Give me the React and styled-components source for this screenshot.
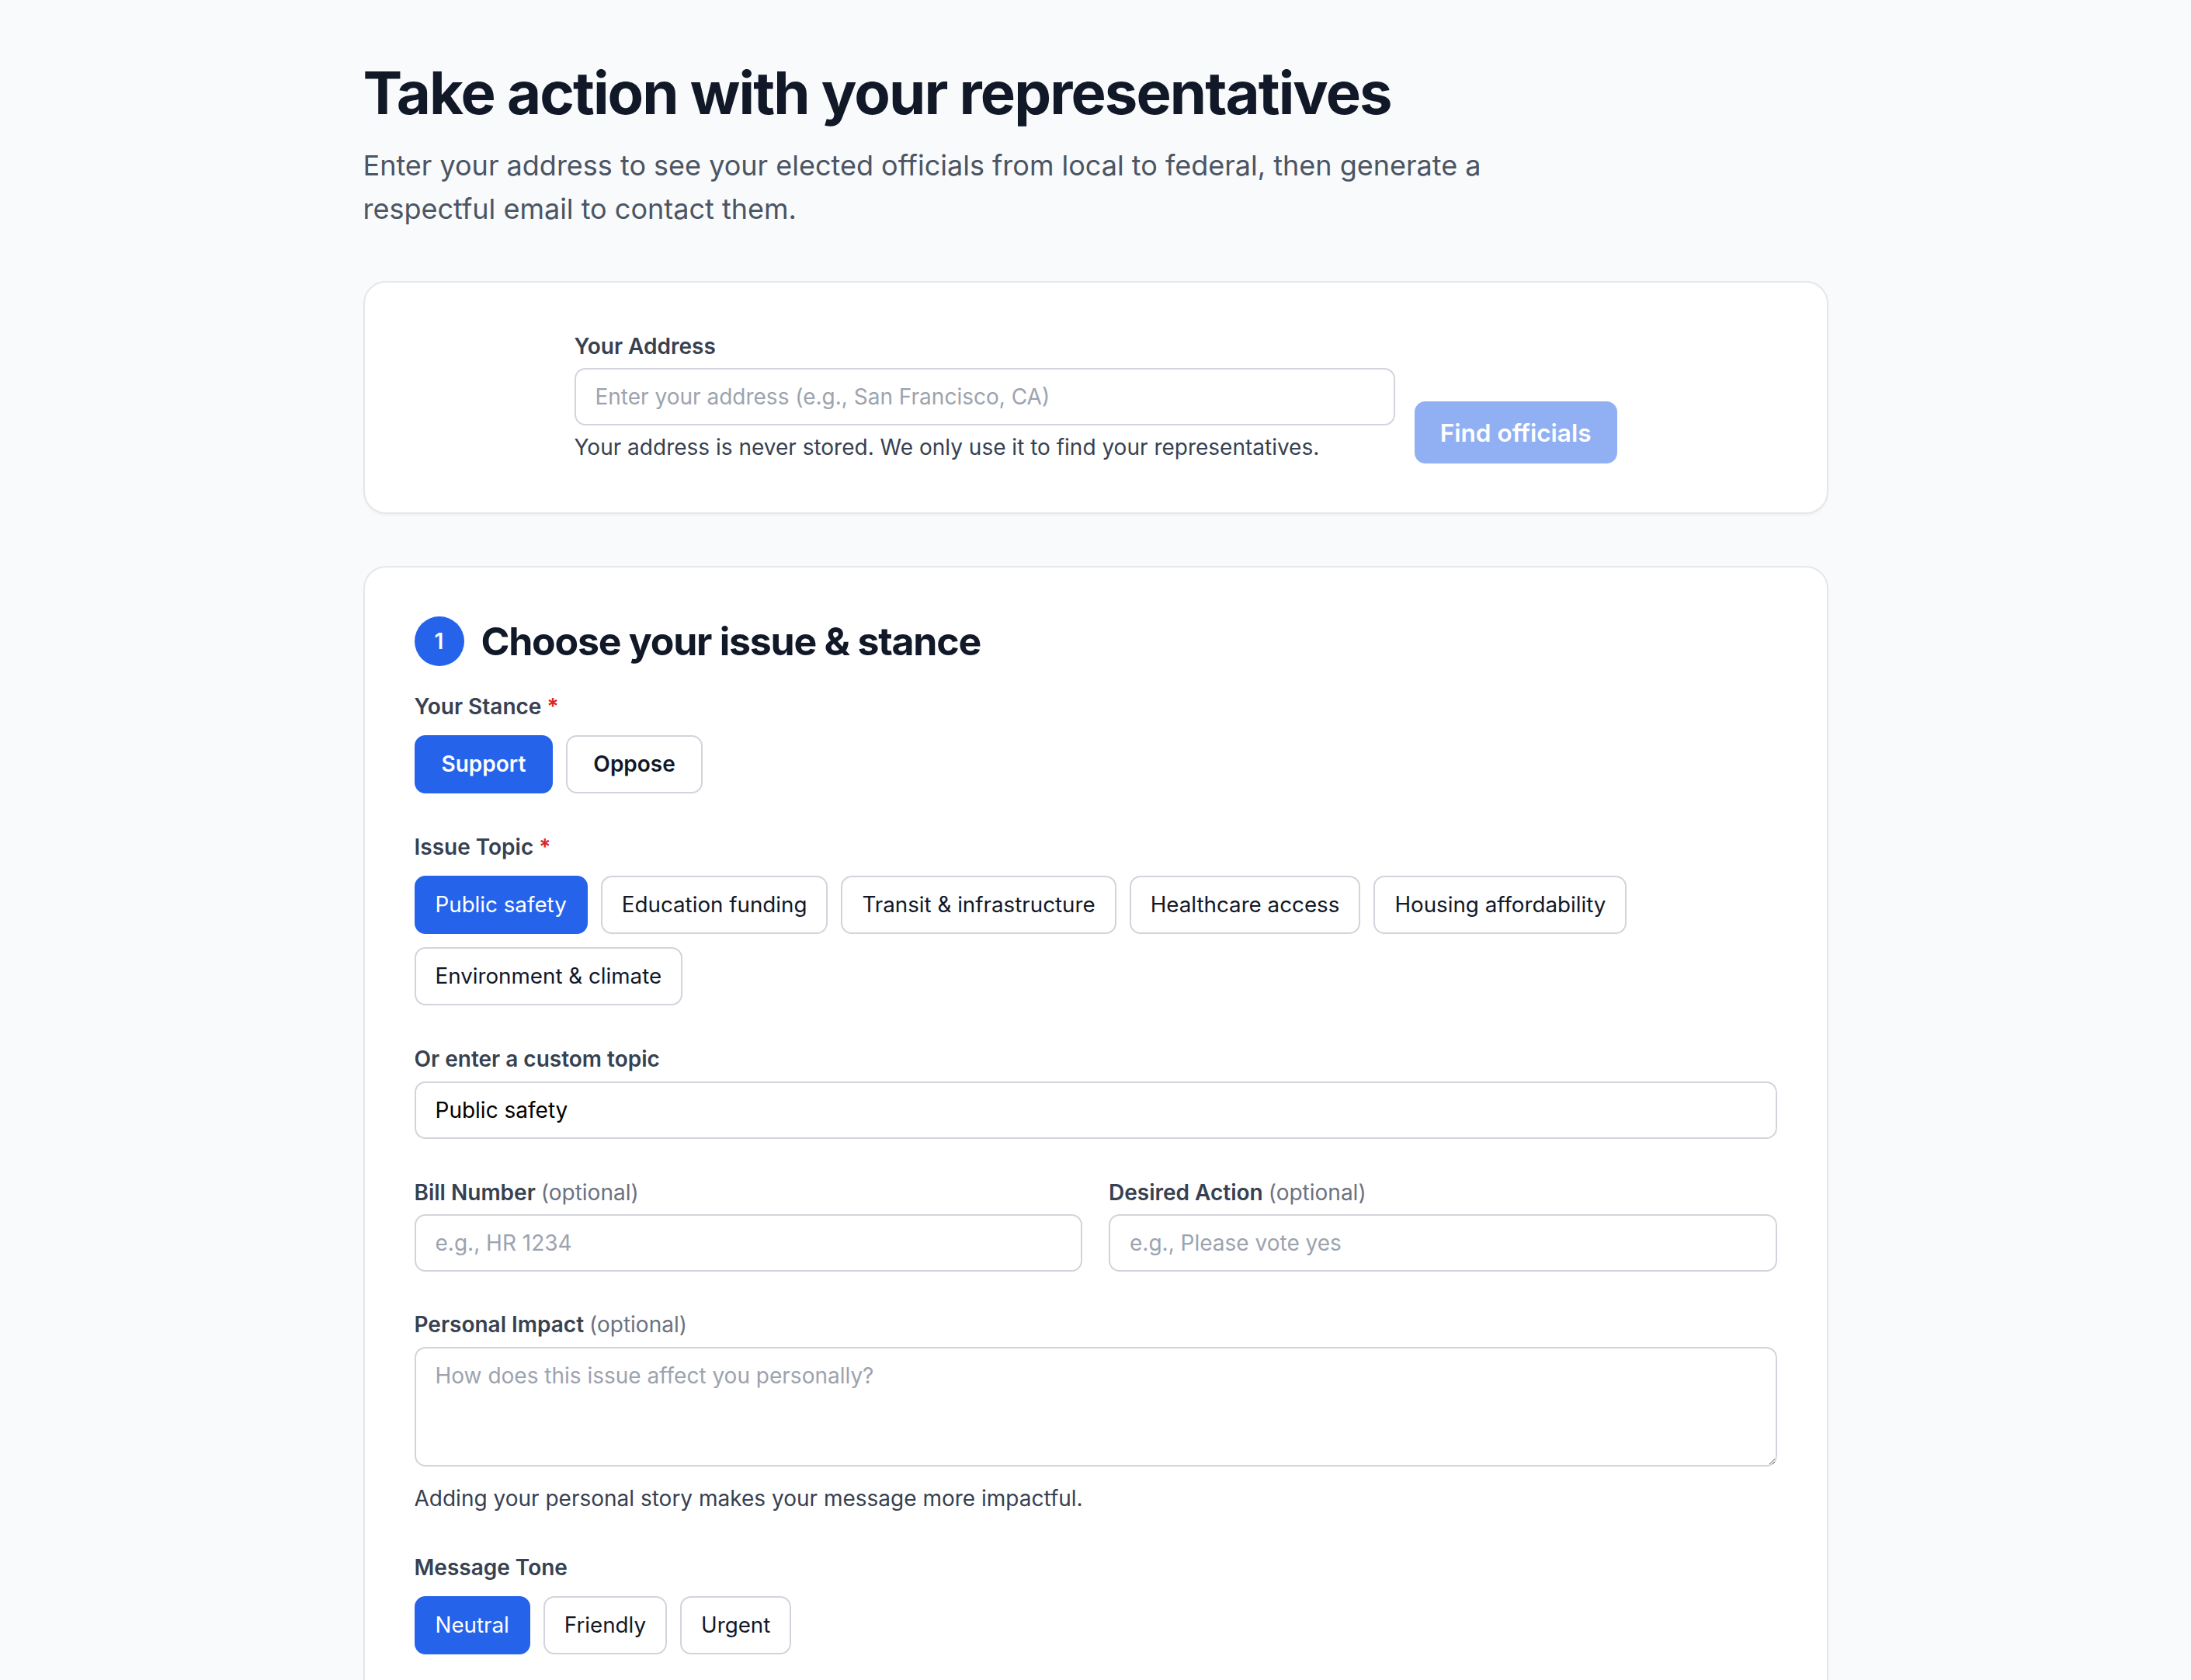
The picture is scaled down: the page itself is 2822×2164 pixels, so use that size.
import React, { useState } from "react";
import styled, { createGlobalStyle } from "styled-components";

const GlobalStyle = createGlobalStyle`
  * {
    box-sizing: border-box;
  }

  body {
    margin: 0;
    background: #f9fafb;
    font-family: Inter, "Noto Sans", sans-serif;
    color: #111827;
  }
`;

const topics = [
  "Public safety",
  "Education funding",
  "Transit & infrastructure",
  "Healthcare access",
  "Housing affordability",
  "Environment & climate",
];

const tones = ["Neutral", "Friendly", "Urgent"];

const App = () => {
  const [stance, setStance] = useState("Support");
  const [topic, setTopic] = useState("Public safety");
  const [tone, setTone] = useState("Neutral");

  return (
    <Page>
      <GlobalStyle />
      <Title>Take action with your representatives</Title>
      <Lead>
        Enter your address to see your elected officials from local to federal, then generate a respectful
        email to contact them.
      </Lead>

      <Card $padTop={62}>
        <AddressRow>
          <AddressField>
            <Label htmlFor="address">Your Address</Label>
            <TextInput id="address" placeholder="Enter your address (e.g., San Francisco, CA)" />
            <Hint $gap={8}>Your address is never stored. We only use it to find your representatives.</Hint>
          </AddressField>
          <FindButton disabled>Find officials</FindButton>
        </AddressRow>
      </Card>

      <Card $padTop={63} $spaced>
        <StepHeader>
          <StepBadge>1</StepBadge>
          <StepTitle>Choose your issue &amp; stance</StepTitle>
        </StepHeader>

        <Section $gap={32}>
          <Label>
            Your Stance <Required>*</Required>
          </Label>
          <ChoiceRow>
            {["Support", "Oppose"].map((s) => (
              <ChoiceButton key={s} $strong $active={stance === s} onClick={() => setStance(s)}>
                {s}
              </ChoiceButton>
            ))}
          </ChoiceRow>
        </Section>

        <Section>
          <Label>
            Issue Topic <Required>*</Required>
          </Label>
          <ChoiceRow>
            {topics.map((t) => (
              <ChoiceButton key={t} $active={topic === t} onClick={() => setTopic(t)}>
                {t}
              </ChoiceButton>
            ))}
          </ChoiceRow>
        </Section>

        <Section>
          <Label htmlFor="custom">Or enter a custom topic</Label>
          <TextInput id="custom" value={topic} onChange={(e) => setTopic(e.target.value)} />
        </Section>

        <Section>
          <TwoCol>
            <div>
              <Label htmlFor="bill">
                Bill Number <Optional>(optional)</Optional>
              </Label>
              <TextInput id="bill" placeholder="e.g., HR 1234" />
            </div>
            <div>
              <Label htmlFor="action">
                Desired Action <Optional>(optional)</Optional>
              </Label>
              <TextInput id="action" placeholder="e.g., Please vote yes" />
            </div>
          </TwoCol>
        </Section>

        <Section $gap={48}>
          <Label htmlFor="impact">
            Personal Impact <Optional>(optional)</Optional>
          </Label>
          <TextArea id="impact" placeholder="How does this issue affect you personally?" />
          <Hint $gap={21}>Adding your personal story makes your message more impactful.</Hint>
        </Section>

        <Section $gap={47}>
          <Label>Message Tone</Label>
          <ChoiceRow>
            {tones.map((t) => (
              <ChoiceButton key={t} $active={tone === t} onClick={() => setTone(t)}>
                {t}
              </ChoiceButton>
            ))}
          </ChoiceRow>
        </Section>
      </Card>
    </Page>
  );
};

export default App;

const Page = styled.main`
  max-width: 1887px;
  margin: 0 auto;
  padding: 78px 0 80px;
`;

const Title = styled.h1`
  margin: 0;
  font-size: 76px;
  line-height: 1.1;
  font-weight: 700;
  letter-spacing: -0.025em;
  color: #111827;
`;

const Lead = styled.p`
  margin: 23px 0 0;
  max-width: 1480px;
  font-size: 36px;
  line-height: 56px;
  color: #4b5563;
`;

const Card = styled.section`
  margin-top: ${(p) => (p.$spaced ? "67px" : "65px")};
  padding: ${(p) => p.$padTop}px 64px 62px;
  background: #fff;
  border: 2px solid #e5e7eb;
  border-radius: 29px;
  box-shadow: 0 2px 3px rgba(0, 0, 0, 0.04);
`;

const AddressRow = styled.div`
  max-width: 1343px;
  margin: 0 auto;
  display: flex;
  align-items: flex-end;
  gap: 25px;
`;

const AddressField = styled.div`
  flex: 1;
`;

const Label = styled.label`
  display: block;
  margin-bottom: 7px;
  font-size: 28px;
  line-height: 41.8px;
  font-weight: 600;
  color: #374151;
`;

const Required = styled.span`
  color: #dc2626;
`;

const Optional = styled.span`
  font-weight: 400;
  color: #6b7280;
`;

const TextInput = styled.input`
  display: block;
  width: 100%;
  padding: 15px 25px;
  font-family: inherit;
  font-size: 28px;
  line-height: 40px;
  color: #000;
  background: #fff;
  border: 2px solid #d1d5db;
  border-radius: 14px;
  outline: none;

  &::placeholder {
    color: #9ca3af;
  }
`;

const TextArea = styled.textarea`
  display: block;
  width: 100%;
  height: 154px;
  padding: 15px 25px;
  font-family: inherit;
  font-size: 28px;
  line-height: 40px;
  color: #000;
  background: #fff;
  border: 2px solid #d1d5db;
  border-radius: 14px;
  outline: none;
  resize: vertical;

  &::placeholder {
    color: #9ca3af;
  }
`;

const Hint = styled.p`
  margin: ${(p) => p.$gap}px 0 0;
  font-size: 28px;
  line-height: 41.8px;
  color: #374151;
`;

const FindButton = styled.button`
  flex-shrink: 0;
  height: 80px;
  padding: 0 33px;
  margin-bottom: 1px;
  font-family: inherit;
  font-size: 31.5px;
  font-weight: 600;
  color: #fff;
  background: #2563eb;
  border: none;
  border-radius: 14px;
  opacity: 0.5;
  cursor: not-allowed;
`;

const StepHeader = styled.div`
  display: flex;
  align-items: center;
  gap: 22px;
`;

const StepBadge = styled.span`
  width: 64px;
  height: 64px;
  border-radius: 50%;
  display: flex;
  align-items: center;
  justify-content: center;
  background: #2563eb;
  color: #fff;
  font-size: 28px;
  font-weight: 600;
`;

const StepTitle = styled.h2`
  margin: 0;
  font-size: 50px;
  line-height: 62px;
  font-weight: 700;
  letter-spacing: -0.025em;
  color: #111827;
`;

const Section = styled.div`
  margin-top: ${(p) => p.$gap ?? 49}px;
`;

const ChoiceRow = styled.div`
  margin-top: 15px;
  display: flex;
  flex-wrap: wrap;
  gap: 17px;
`;

const ChoiceButton = styled.button`
  padding: 15px ${(p) => (p.$strong ? "33px" : "25px")};
  font-family: inherit;
  font-size: ${(p) => (p.$strong ? "28px" : "27.75px")};
  line-height: 41px;
  font-weight: ${(p) => (p.$strong ? 600 : 400)};
  color: ${(p) => (p.$active ? "#fff" : "#111827")};
  background: ${(p) => (p.$active ? "#2563eb" : "#fff")};
  border: 2px solid ${(p) => (p.$active ? "#2563eb" : "#d1d5db")};
  border-radius: 14px;
  cursor: pointer;
`;

const TwoCol = styled.div`
  display: grid;
  grid-template-columns: 1fr 1fr;
  gap: 34px;
`;
